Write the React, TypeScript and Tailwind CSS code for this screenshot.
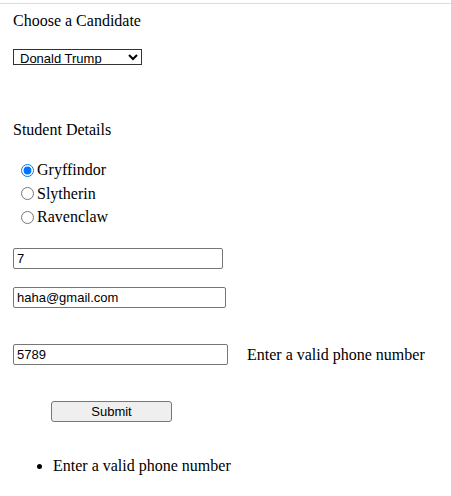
import React, { useState } from 'react';

const serif = "font-['Liberation_Serif','Times_New_Roman',serif]";
const sans = "font-['Liberation_Sans',Arial,sans-serif]";

const houses = ['Gryffindor', 'Slytherin', 'Ravenclaw'];

export default function App() {
  const [house, setHouse] = useState('Gryffindor');
  const [age, setAge] = useState('7');
  const [email, setEmail] = useState('haha@gmail.com');
  const [phone, setPhone] = useState('5789');

  const inputCls = `${sans} block h-[21px] border border-[#767676] rounded-[2px] bg-white px-[3px] text-[13px] leading-[17px] text-black outline-none`;

  return (
    <div className={`${serif} min-h-screen bg-white text-[16px] leading-[18px] text-black`}>
      <div className="mt-[3px] h-px bg-[#dcdcdc]" />
      <form className="pl-[13px]" onSubmit={(e) => e.preventDefault()}>
        <p className="mt-[8px]">Choose a Candidate</p>
        <select
          defaultValue="Donald Trump"
          className={`${sans} mt-[19px] block h-[16px] w-[129px] border border-[#333] bg-white py-0 pl-[2px] text-[13px] leading-none text-black`}
        >
          <option>Donald Trump</option>
          <option>Hillary Clinton</option>
        </select>

        <p className="mt-[56px]">Student Details</p>

        <div className="mt-[22px] flex flex-col gap-[5.5px] pl-[8px]">
          {houses.map((h) => (
            <label key={h} className="flex items-center gap-[3px]">
              <input
                type="radio"
                name="house"
                checked={house === h}
                onChange={() => setHouse(h)}
                className="m-0 h-[13px] w-[13px] accent-[#0075ff]"
              />
              {h}
            </label>
          ))}
        </div>

        <input className={`${inputCls} mt-[22px] w-[210px]`} value={age} onChange={(e) => setAge(e.target.value)} />
        <input className={`${inputCls} mt-[18px] w-[213px]`} value={email} onChange={(e) => setEmail(e.target.value)} />

        <div className="mt-[36px] flex items-center gap-[19px]">
          <input className={`${inputCls} w-[215px]`} value={phone} onChange={(e) => setPhone(e.target.value)} />
          <span>Enter a valid phone number</span>
        </div>

        <button
          type="submit"
          className={`${sans} ml-[38px] mt-[36px] block h-[21px] w-[121px] rounded-[3px] border border-[#767676] bg-[#efefef] text-[13px] text-black`}
        >
          Submit
        </button>

        <ul className="mt-[35px] list-disc pl-[40px]">
          <li>Enter a valid phone number</li>
        </ul>
      </form>
    </div>
  );
}
